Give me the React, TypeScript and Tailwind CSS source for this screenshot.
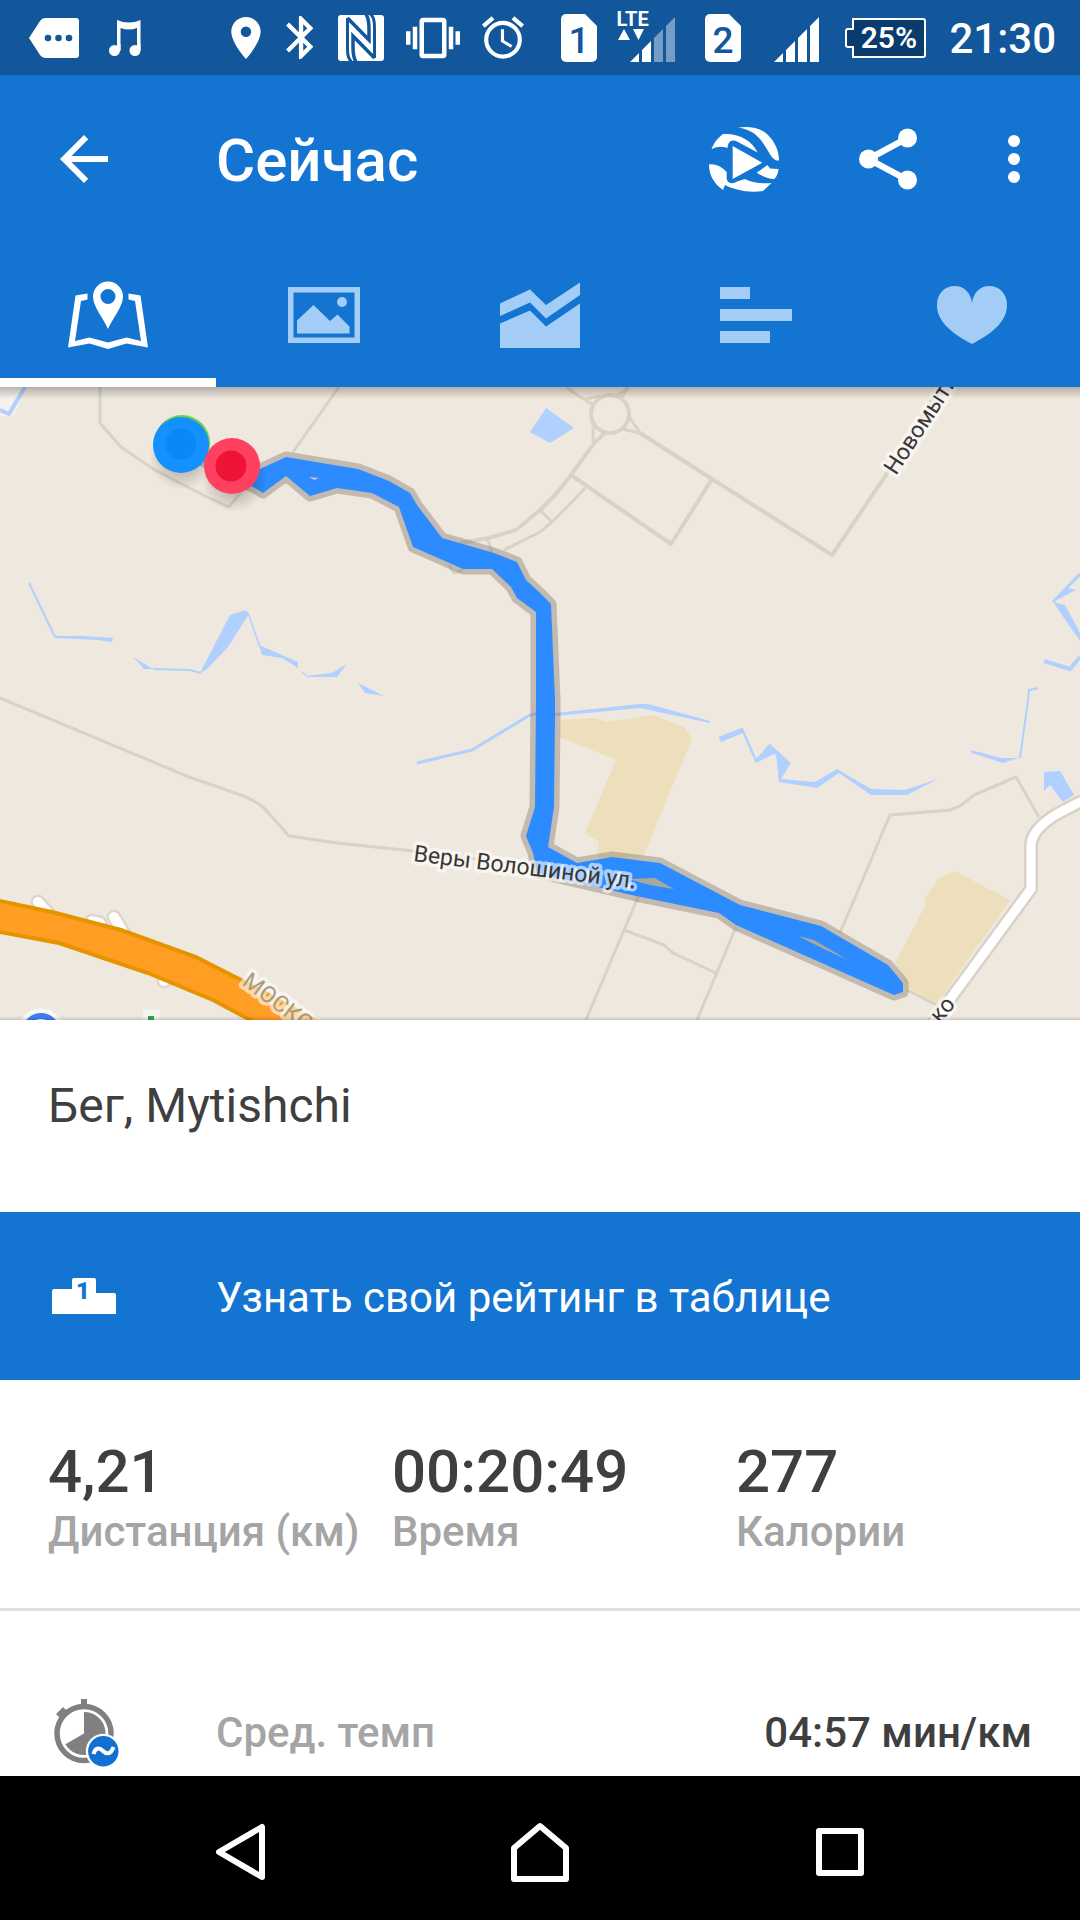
import type { ReactNode } from "react";

const stats = [
  { value: "4,21", label: "Дистанция (км)" },
  { value: "00:20:49", label: "Время" },
  { value: "277", label: "Калории" },
];

const route =
  "M200 72L232 90L260 82L286 70L358 82L389 94L410 106L417 118L442 151L494 166L517 175L526 193L540 206L551 217L555 313L555 330L554 420L548 460L577 476L612 470L660 476L740 518L821 539L888 578L903 596L903 605L894 608L736 538L719 526L636 509L537 486L533 466L526 449L535 420L536 313L536 225L517 211L511 200L492 182L463 182L413 160L399 120L372 106L337 101L310 109L286 89L263 106L253 100L232 92Z";

function SimCard({ slot }: { slot: string }) {
  return (
    <svg width="36" height="48" viewBox="0 0 36 48" aria-hidden="true">
      <path d="M5 0H24L36 12V43A5 5 0 0 1 31 48H5A5 5 0 0 1 0 43V5A5 5 0 0 1 5 0Z" fill="#fff" />
      <text x="18" y="39" textAnchor="middle" fontSize="37" fontWeight="500" fill="#12579b">{slot}</text>
    </svg>
  );
}

function SignalBars({ weak = false }: { weak?: boolean }) {
  return (
    <svg width="45" height="45" viewBox="0 0 45 45" fill="#fff" aria-hidden="true">
      <path d="M0 45L9 36V45ZM12 33L21 24V45H12Z" />
      <path d="M24 21L33 12V45H24ZM36 9L45 0V45H36Z" opacity={weak ? 0.42 : 1} />
    </svg>
  );
}

function StatusBar() {
  return (
    <div className="flex h-[75px] items-center bg-[#12579b] pr-6 pl-[29px] text-white">
      <div className="flex items-center gap-[30px]">
        <svg width="50" height="40" viewBox="0 0 50 40">
          <path d="M0 20L11 3Q13 0 16 0H47A3 3 0 0 1 50 3V37A3 3 0 0 1 47 40H16Q13 40 11 37Z" fill="#fff" />
          <g fill="#12579b"><circle cx="19" cy="20" r="3.3" /><circle cx="29.500" cy="20" r="3.3" /><circle cx="40" cy="20" r="3.3" /></g>
        </svg>
        <svg width="32" height="36" viewBox="0 0 32 36" fill="#fff">
          <path d="M8 0Q20 5 31.500 0V30H28V8Q20 11 11.500 8V30H8Z" />
          <circle cx="5.500" cy="30.500" r="5.500" /><circle cx="26" cy="30.500" r="5.500" />
          <path d="M8 24h3.500v7H8zM28 24h3.500v7H28z" />
        </svg>
      </div>
      <div className="ml-auto flex items-center gap-[22px]">
        <svg width="34" height="44" viewBox="4.500 1.500 16 21" fill="#fff">
          <path d="M12 2C8.130 2 5 5.130 5 9c0 5.250 7 13 7 13s7-7.750 7-13c0-3.870-3.130-7-7-7zm0 9.500a2.500 2.500 0 1 1 0-5 2.500 2.500 0 0 1 0 5z" />
        </svg>
        <svg width="28" height="43" viewBox="5 2 13 20" fill="#fff">
          <path d="M17.710 7.710L12 2h-1v7.590L6.410 5 5 6.410 10.590 12 5 17.590 6.410 19 11 14.410V22h1l5.710-5.710-4.300-4.290 4.300-4.290zM13 5.830l1.880 1.880L13 9.590V5.830zm1.880 10.460L13 18.170v-3.760l1.880 1.880z" />
        </svg>
        <svg width="48" height="46" viewBox="-2 0 48 46">
          <rect width="46" height="46" rx="3" fill="#fff" />
          <g fill="none" stroke="#12579b" strokeWidth="3">
            <path d="M13.500 47C9.500 43 9.500 38 9.500 32V3" />
            <path d="M32.500 -1C36.500 3 36.500 8 36.500 14V43" />
            <path d="M9.500 3L31 25V14Q31 4 28 -1" fill="none" strokeWidth="3.500" />
            <path d="M36.500 43L15 21V32Q15 42 18 47" fill="none" strokeWidth="3.500" />
          </g>
        </svg>
        <svg width="54" height="54" viewBox="0 0 24 24" fill="#fff">
          <path d="M0 15h2V9H0v6zm3 2h2V7H3v10zm19-8v6h2V9h-2zm-3 8h2V7h-2v10zM16.500 3h-9C6.670 3 6 3.670 6 4.500v15c0 .83.67 1.500 1.500 1.500h9c.83 0 1.500-.67 1.500-1.500v-15c0-.83-.67-1.500-1.500-1.500zM16 19H8V5h8v14z" />
        </svg>
        <svg width="42" height="43" viewBox="2 1.860 20 20.140" fill="#fff">
          <path d="M22 5.720l-4.600-3.860-1.290 1.530 4.600 3.860L22 5.720zM7.880 3.390L6.600 1.860 2 5.710l1.290 1.530 4.590-3.850zM12.500 8H11v6l4.750 2.850.75-1.230-4-2.370V8zM12 4a9 9 0 1 0 0 18 9 9 0 0 0 0-18zm0 16a7 7 0 1 1 0-14 7 7 0 0 1 0 14z" />
        </svg>
      </div>
      <div className="ml-[37px] flex items-center gap-5">
        <SimCard slot="1" />
        <div className="relative mt-1 ml-[13px]">
          <SignalBars weak />
          <span className="absolute -top-2 -left-3.5 text-[20px] leading-5 font-bold">LTE</span>
          <svg className="absolute top-3 -left-3" width="26" height="11" viewBox="0 0 26 11" fill="#fff">
            <path d="M0 11L6 0L12 11ZM15 0H26L20.500 11Z" />
          </svg>
        </div>
      </div>
      <div className="mr-[26px] ml-[30px] flex items-center gap-[33px]">
        <SimCard slot="2" />
        <div className="mt-1"><SignalBars /></div>
      </div>
      <div className="relative">
        <svg width="81" height="40" viewBox="0 0 81 40">
          <path d="M10 1H78A2 2 0 0 1 80 3V37A2 2 0 0 1 78 39H8V29H3A2 2 0 0 1 1 27V13A2 2 0 0 1 3 11H8V1Z" fill="#093b6c" stroke="#fff" strokeWidth="2" />
        </svg>
        <span className="absolute inset-0 pl-1.5 text-center text-[30px] leading-10 font-semibold">25%</span>
      </div>
      <span className="ml-[23px] pt-[3px] text-[42px] leading-[60px] font-medium">21:30</span>
    </div>
  );
}

function Toolbar() {
  return (
    <header className="flex h-[168px] items-center pr-12 pl-12">
      <button type="button" aria-label="Назад">
        <svg width="72" height="72" viewBox="0 0 24 24" fill="#fff">
          <path d="M20 11H7.830l5.590-5.590L12 4l-8 8 8 8 1.410-1.410L7.830 13H20v-2z" />
        </svg>
      </button>
      <h1 className="ml-24 pt-1 text-[60px] leading-[60px] font-medium text-white">Сейчас</h1>
      <div className="ml-auto flex items-center gap-[78px]">
        <button type="button" aria-label="Воспроизвести маршрут">
          <svg width="72" height="66" viewBox="0 0 72 66" fill="#fff">
            <path d="M24.700 20L54.300 36.700L24.700 53Z" />
            <path d="M30.300 1.500C40 0 52 1 60 9C67 16 71 25 71 34.500C67 35 64 32 60 25C54 15 48 4 30.300 1.500Z" />
            <path d="M3.500 23.500C6 16 11 11 15 8C30 7 44 14 49.500 26.500L29 15.500C24 13 20 15 19.500 22C14 20 8 20 3.500 23.500Z" />
            <path d="M1 38.500C8 37 15 42 18.700 46V53C20 58 25 58 29 55.500L37 53C45 57 54 58 63.500 57L55 65C40 67 27 64 17 59L15 64C5 57 1 48 1 38.500Z" />
            <path d="M48.700 46.700L59.500 39L62 42.500L70.500 43C70 48 68 52 66 53C60 53 54 50 48.700 46.700Z" />
          </svg>
        </button>
        <button type="button" aria-label="Поделиться">
          <svg width="60" height="62" viewBox="0 0 60 62" fill="#fff">
            <path d="M49.500 10L10.500 31L49.500 52" fill="none" stroke="#fff" strokeWidth="6.500" />
            <circle cx="49.500" cy="10" r="9.500" /><circle cx="10.500" cy="31" r="9.500" /><circle cx="49.500" cy="52" r="9.500" />
          </svg>
        </button>
        <button type="button" aria-label="Ещё">
          <svg width="36" height="48" viewBox="0 0 36 48" fill="#fff">
            <circle cx="18" cy="6" r="6" /><circle cx="18" cy="24" r="6" /><circle cx="18" cy="42" r="6" />
          </svg>
        </button>
      </div>
    </header>
  );
}

function Tab({ label, active = false, children }: { label: string; active?: boolean; children: ReactNode }) {
  return (
    <button
      type="button"
      role="tab"
      aria-label={label}
      aria-selected={active}
      className={
        active
          ? "flex h-36 items-center justify-center border-y-[9px] border-t-transparent border-b-white text-white"
          : "flex h-36 items-center justify-center text-[#a3cdf6]"
      }
    >
      {children}
    </button>
  );
}

function Tabs() {
  return (
    <div role="tablist" className="grid grid-cols-5">
      <Tab label="Карта" active>
        <svg width="80" height="72" viewBox="0 0 80 72" fill="currentColor">
          <path d="M19.500 14.500L7.500 16.500L0 68.500L21.500 64.500L40 70L58.500 64.500L80 68.500L72.500 16.500L60.500 14.500V20.500L67 22L73 62L58.500 58.500L40 63.500L21.500 58.500L7 62L13 22L19.500 20.500Z" />
          <path fillRule="evenodd" d="M40 50C36 40 25 28 25 17.500A15 15 0 0 1 55 17.500C55 28 44 40 40 50ZM40 10A7.500 7.500 0 1 0 40 25A7.500 7.500 0 1 0 40 10Z" />
        </svg>
      </Tab>
      <Tab label="Фото">
        <svg width="72" height="56" viewBox="0 0 72 56" fill="currentColor">
          <rect x="2.750" y="2.750" width="66.500" height="50.500" fill="none" stroke="currentColor" strokeWidth="5.500" />
          <path d="M9 46.500V33.500L25.500 18L42 34L49.500 27.500L61.500 39.500V46.500Z" />
          <circle cx="54" cy="15" r="5" />
        </svg>
      </Tab>
      <Tab label="График">
        <svg width="80" height="66" viewBox="0 0 80 66" fill="currentColor">
          <path d="M0 21.500L30 7.500L46 23L80 .5V13L46 36.500L30 20.500L0 34Z" />
          <path d="M0 41.500L30 28.500L46 44.500L80 21.500V66H0Z" />
        </svg>
      </Tab>
      <Tab label="Круги">
        <svg width="72" height="56" viewBox="0 0 72 56" fill="currentColor">
          <path d="M0 0H30V12H0ZM0 22H72V34H0ZM0 44H50V56H0Z" />
        </svg>
      </Tab>
      <Tab label="Пульс">
        <svg width="70" height="58" viewBox="0 0 70 58" fill="currentColor">
          <path d="M35 58C12 46 0 34 0 19C0 8 7 0 18 0C27 0 34 7 35 17C36 7 43 0 52 0C63 0 70 8 70 19C70 34 58 46 35 58Z" />
        </svg>
      </Tab>
    </div>
  );
}

function RouteMap() {
  return (
    <div className="relative overflow-hidden">
      <svg className="block w-full" viewBox="0 0 1080 633" role="img" aria-label="Маршрут пробежки">
        <defs>
          <radialGradient id="markerShadow">
            <stop offset="0.500" stopColor="#000" stopOpacity="0.180" />
            <stop offset="1" stopColor="#000" stopOpacity="0" />
          </radialGradient>
        </defs>
        <rect width="1080" height="633" fill="#efe8de" />

        {/* fields */}
        <g fill="#eddfbb">
          <path d="M561 333L595 331L607 335L654 328L685 341L692 352L643 470H597L599 455L585 446L616 373L559 350Z" />
          <path d="M955 484L1010 513L936 618L907 600L895 576L924 521L926 510L939 491Z" />
        </g>

        {/* water */}
        <path d="M0 0H25L14 29H0Z" fill="#f6f1ea" />
        <g fill="#b0d0ff">
          <path d="M546 21L574 41L550 56L530 45Z" />
          <path d="M55 249H84L113 251L112 255L98 253L55 251Z" />
          <path d="M133 270L153 282H144Z" />
          <path d="M200 286L230 228L246 223L249 227L228 260L206 283Z" />
          <path d="M259 258L282 268L298 275V281L282 271L262 268Z" />
          <path d="M306 289L332 286L347 277L337 290H307Z" />
          <path d="M358 296L384 309L365 306Z" />
          <path d="M555 326L640 317H648L710 334V336L640 321L555 329Z" />
          <path d="M719 350L742 341L745 346L756 372L770 357L791 376L781 392L815 395L837 382L871 402L905 403L938 392L907 408H871L839 386L817 401L779 395L776 366L756 376L743 346L721 355Z" />
          <path d="M971 363L1001 371H1019L1003 376L972 366Z" />
          <path d="M1044 385L1060 384L1074 408L1063 415L1050 398L1044 404Z" />
          <path d="M1053 215L1068 201L1076 203Z" />
          <path d="M1053 215L1065 218L1080 246V254L1062 228Z" />
        </g>
        <g fill="none" stroke="#b0d0ff" strokeWidth="2" strokeLinejoin="round">
          <path d="M29 196L55 250" />
          <path d="M153 282L190 283L201 286" />
          <path d="M248 226L260 260M302 285L307 289" strokeWidth="1.500" />
          <path d="M719 351L742 342L756 374L770 358L778 370L780 394L816 398L838 384L871 405L906 406" />
          <path d="M1020 371L1028 313L1029 303L1038 301" />
          <path d="M1080 187L1053 215" strokeWidth="3" />
          <path d="M1044 274L1070 282L1080 270" strokeWidth="4" />
          <path d="M417 376L472 363L530 328L540 326" strokeWidth="3" />
          <path d="M0 23L9 27L25 0" strokeWidth="4" />
        </g>

        {/* minor streets */}
        <g fill="none" stroke="#d9d3c6" strokeWidth="4" strokeLinejoin="round">
          <path d="M100 0V36L121 60L155 83L207 110L229 120L241 105" strokeWidth="3" />
          <path d="M339 0L293 65" strokeWidth="3" />
          <path d="M460 156L489 151L516 143L540 123L555 108L571 88L595 55L605 46" />
          <path d="M504 163L540 145L552 135L574 113L585 101M487 151L492 165M540 123L552 135M449 178L454 186L463 183" strokeWidth="3" />
          <path d="M571 88L671 157L712 92" />
          <circle cx="610" cy="27" r="19" />
          <path d="M566 0L580 10L592 17M586 12L600 9M628 0L622 10M617 8L628 2M593 40V55M628 28L640 46L622 42" strokeWidth="3" />
          <path d="M640 46L712 92L832 168L886 88L940 0" />
          <path d="M0 311L189 390L241 408Q256 414 264 421L289 449L337 456L413 464L540 480" strokeWidth="3" />
          <path d="M840 546L890 428L950 423L960 419L974 408L1016 390L1039 430" strokeWidth="3" />
          <path d="M638 510L586 633M624 543L664 558L673 566L716 586M736 540L697 633M907 603L940 620" strokeWidth="3" />
        </g>

        {/* main roads */}
        <g fill="none" strokeLinecap="round">
          <path d="M38 515L56 535M92 534L100 536M114 530L126 550M164 594L172 590" stroke="#dcd6cd" strokeWidth="15" />
          <path d="M38 515L56 535M92 534L100 536M114 530L126 550M164 594L172 590" stroke="#fff" strokeWidth="10" />
          <path d="M1080 415L1057 427Q1032 442 1031 458V502L948 615L929 642" stroke="#d8d2c7" strokeWidth="14" />
          <path d="M1080 415L1057 427Q1032 442 1031 458V502L948 615L929 642" stroke="#fff" strokeWidth="9" />
        </g>
        <path d="M-5 513L52 525L121 543L196 570L243 594L320 636H256L213 613L148 586L59 556L-5 544Z" fill="#ff9e22" stroke="#e69300" strokeWidth="4" />

        {/* recorded track */}
        <path d={route} fill="none" stroke="#50463a" strokeOpacity="0.280" strokeWidth="11" strokeLinejoin="round" />
        <path d={route} fill="#2b8bff" />
        <g fill="#a9a89f">
          <path d="M628 492L655 491L674 502L650 498Z" />
          <path d="M798 549L814 553L848 573L826 563Z" />
          <path d="M309 90L319 91L314 93Z" fill="#c9c8c4" />
        </g>

        {/* street names */}
        <g fontSize="23" fill="#3a3633" stroke="#fff" strokeOpacity="0.600" strokeWidth="7" strokeLinejoin="round" style={{ paintOrder: "stroke" }}>
          <text transform="translate(413 474) rotate(7)">Веры Волошиной ул.</text>
          <text transform="translate(896 89) rotate(-57)">Новомытищи</text>
          <text transform="translate(940 637) rotate(-50)">ко</text>
          <text transform="translate(241 597) rotate(37)" fill="#aa9b7b">МОСКОВ</text>
        </g>

        <g fill="none">
          <circle cx="41" cy="645" r="16" stroke="#fff" strokeOpacity="0.700" strokeWidth="15" />
          <circle cx="41" cy="645" r="16" stroke="#4080ee" strokeWidth="6" />
          <path d="M143 623H160V633H143Z" fill="#f6f4ee" />
          <path d="M148 629H154V633H148Z" fill="#34a351" />
        </g>

        {/* start, current and finish markers */}
        <circle cx="182" cy="70" r="33" fill="url(#markerShadow)" />
        <circle cx="182" cy="56" r="28" fill="#6bd04b" />
        <circle cx="181" cy="58" r="28" fill="#1490ff" />
        <circle cx="181" cy="57" r="15.500" fill="#0a88f6" />
        <circle cx="234" cy="92" r="33" fill="url(#markerShadow)" />
        <circle cx="232" cy="79" r="28" fill="#ff4060" />
        <circle cx="231" cy="79" r="15.500" fill="#ef1337" />
      </svg>
      <div className="absolute inset-x-0 top-0 h-3 bg-linear-to-b from-black/25 to-transparent" />
      <div className="absolute inset-x-0 bottom-0 h-1 bg-linear-to-t from-black/15 to-transparent" />
    </div>
  );
}

function SystemNav() {
  return (
    <nav className="grid h-36 grid-cols-3 items-center bg-black px-[90px] pt-2">
      <button type="button" aria-label="Назад" className="flex justify-center">
        <svg width="50" height="58" viewBox="0 0 50 58" fill="none" stroke="#fff" strokeWidth="6" strokeLinejoin="round">
          <path d="M47 4V54L4 29Z" />
        </svg>
      </button>
      <button type="button" aria-label="Домой" className="flex justify-center">
        <svg width="58" height="60" viewBox="0 0 58 60" fill="none" stroke="#fff" strokeWidth="6" strokeLinejoin="round">
          <path d="M3 26L29 4L55 26V57H3Z" />
        </svg>
      </button>
      <button type="button" aria-label="Недавние" className="flex justify-center">
        <svg width="50" height="50" viewBox="0 0 50 50" fill="none" stroke="#fff" strokeWidth="6" strokeLinejoin="round">
          <path d="M4 4H46V46H4Z" />
        </svg>
      </button>
    </nav>
  );
}

export default function App() {
  return (
    <div className="flex min-h-screen flex-col bg-white font-['Roboto',sans-serif] text-[#3f3f3f]">
      <StatusBar />
      <div className="bg-[#1474d2]">
        <Toolbar />
        <Tabs />
      </div>

      <main className="flex-1">
        <RouteMap />
        <h2 className="px-12 pt-14 pb-[76px] text-[48px] leading-[60px]">Бег, Mytishchi</h2>

        <button type="button" className="flex h-[168px] w-full items-center bg-[#1474d2] px-12 text-left text-white">
          <svg width="72" height="36" viewBox="-4 0 72 36">
            <path d="M0 36V13Q0 11 2 11H20V2Q20 0 22 0H42Q44 0 44 2V15H62Q64 15 64 17V36Z" fill="#fff" />
            <text x="31" y="21" textAnchor="middle" fontSize="24" fontWeight="900" fill="#1474d2">1</text>
          </svg>
          <span className="ml-24 pt-1 text-[42px] leading-[60px]">Узнать свой рейтинг в таблице</span>
        </button>

        <dl className="grid grid-cols-3 border-b-[3px] border-[#e0e0e0] pt-[62px] pb-[46px] pl-12 font-medium">
          {stats.map((stat) => (
            <div key={stat.label} className="flex flex-col-reverse">
              <dt className="text-[42px] leading-[60px] whitespace-nowrap text-[#a5a5a5]">{stat.label}</dt>
              <dd className="text-[60px] leading-[60px]">{stat.value}</dd>
            </div>
          ))}
        </dl>

        <div className="flex items-center px-12 pt-[86px] pb-[7px] text-[42px] leading-[60px] font-medium">
          <svg width="72" height="72" viewBox="0 0 72 72">
            <path d="M33 2H39V10H33ZM8 17L15 10L20 15L13 22Z" fill="#808080" />
            <circle cx="36" cy="36.500" r="27" fill="#fff" stroke="#808080" strokeWidth="5.500" />
            <path d="M36 36.500V15A21.500 21.500 0 1 1 17.400 47.200Z" fill="#808080" />
            <circle cx="55.300" cy="54.300" r="17.500" fill="#fff" />
            <circle cx="55.300" cy="54.300" r="15.200" fill="#1170d2" />
            <path d="M45.500 57C47 51 51 50 55 54S63 57 65.500 50" fill="none" stroke="#fff" strokeWidth="4" />
          </svg>
          <span className="ml-24 text-[#a5a5a5]">Сред. темп</span>
          <span className="ml-auto">04:57 мин/км</span>
        </div>
      </main>

      <SystemNav />
    </div>
  );
}
